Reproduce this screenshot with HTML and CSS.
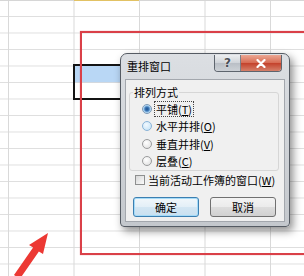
FILE: index.html
```html
<!DOCTYPE html>
<html>
<head>
	<title>重排窗口</title>
	<link rel="stylesheet" href="styles.css">
</head>
<body>

<div class="sheet">
	<div class="col-mark"></div>
	<div class="selection"><div class="sel-top"></div></div>

	<div class="mark"></div>

	<div class="dialog">
		<div class="titlebar">
			<span class="title">重排窗口</span>
			<div class="caption-btns">
				<span class="btn-help">?</span>
				<span class="btn-close">
					<svg width="10" height="9" viewBox="0 0 10 9"><path d="M1.5 1 L8.5 8 M8.5 1 L1.5 8" stroke="#fff" stroke-width="2.2" stroke-linecap="round"/></svg>
				</span>
			</div>
		</div>

		<div class="client">
			<fieldset class="group">
				<legend>排列方式</legend>
				<label class="opt"><span class="radio checked"></span><span class="focus">平铺(<u>T</u>)</span></label>
				<label class="opt"><span class="radio hover"></span><span>水平并排(<u>O</u>)</span></label>
				<label class="opt"><span class="radio"></span><span>垂直并排(<u>V</u>)</span></label>
				<label class="opt"><span class="radio"></span><span>层叠(<u>C</u>)</span></label>
			</fieldset>

			<label class="check"><span class="box"></span><span>当前活动工作簿的窗口(<u>W</u>)</span></label>

			<div class="buttons">
				<button class="btn default">确定</button>
				<button class="btn">取消</button>
			</div>
		</div>
	</div>

	<svg class="arrow" width="60" height="56" viewBox="0 220 60 56">
		<polygon points="48,233 43,254 38.9,251.5 19.8,279 14,275 33.1,247.5 29,245" fill="#ec3833"/>
	</svg>
</div>

</body>
</html>
```

FILE: styles.css
```css
body {margin: 0; padding: 0; font-family: "Noto Sans CJK SC", "Noto Sans", sans-serif; font-size: 11px; color: #000;}

/* spreadsheet background */
.sheet {position: relative; width: 304px; height: 276px; overflow: hidden; background-color: #fff;
	background-image: linear-gradient(to right, #d9d9d9 1px, transparent 1px), linear-gradient(to bottom, #dedede 1px, transparent 1px);
	background-size: 65.5px 16.5px; background-position: 8px 16px; box-shadow: inset 0 1px #d6d6d6;}
.col-mark {position: absolute; left: 74px; top: 0; width: 65px; height: 1px; background: #e2c264;}
.selection {position: absolute; left: 73px; top: 64px; width: 60px; height: 32px; border: 2px solid #141414;}
.sel-top {height: 16px; background: #b9d7f5; border-bottom: 1px solid #d3d8de;}

/* red highlight + arrow */
.mark {position: absolute; left: 80px; top: 31px; width: 240px; height: 220px; border: 2px solid #da4048; box-shadow: 0 0 1px rgba(218,64,72,.6);}
.arrow {position: absolute; left: 0; top: 220px;}

/* dialog */
.dialog {position: absolute; left: 120px; top: 53px; width: 170px; height: 174px; box-sizing: border-box;
	border: 1px solid #555b63; border-radius: 7px 7px 4px 4px; background: linear-gradient(#dcdfe3, #c4c8cd);
	box-shadow: 3px 4px 8px rgba(0,0,0,.45); display: flex; flex-direction: column; padding: 0 4px 4px 4px;}
.titlebar {height: 25px; display: flex; align-items: flex-start;}
.title {line-height: 25px; padding-left: 2px; font-size: 11px;}
.caption-btns {display: flex; margin: 1px 3px 0 auto; border: 1px solid #5e656e; border-top: none; border-radius: 0 0 4px 4px; overflow: hidden;}
.btn-help {width: 25px; height: 16px; border-right: 1px solid #7a8089; background: linear-gradient(#eceef0, #cfd3d8 50%, #b9bec5 50%, #cdd1d6);
	font: bold 12px/16px "DejaVu Sans", sans-serif; color: #4a4f56; text-align: center; text-shadow: 0 0 2px #fff;}
.btn-close {width: 40px; height: 16px; display: flex; align-items: center; justify-content: center;
	background: linear-gradient(#eca793, #d66a52 50%, #c3402a 50%, #d5806a);}

.client {flex: 1; background: #f0f0f0; border: 1px solid #a3a7ad; display: flex; flex-direction: column;}
.group {margin: 5px 5px 0 3px; padding: 1px 0 0 0; border: 1px solid #d6d6d6; border-radius: 3px;}
.group legend {margin-left: 3px; padding: 0 1px; line-height: 14px;}
.opt {display: flex; align-items: center; height: 17.5px; padding-left: 12px; gap: 4px;}
.opt u, .check u {text-decoration: underline;}
.radio {width: 10px; height: 10px; box-sizing: border-box; border-radius: 50%; border: 1px solid #9a9b9c;
	background: radial-gradient(circle at 40% 35%, #fff, #dcdcdc);}
.radio.hover {border-color: #8ab4d8; background: radial-gradient(circle at 40% 35%, #f2f9ff, #bfe0f5);}
.radio.checked {border-color: #7d99b6; background: radial-gradient(circle, #1f4f8a 0, #3b78b8 2px, #a9d1f0 3.5px, #eef6fc 5px);}
.focus {border: 1px dotted #444; padding: 0 1px; margin-left: -2px; line-height: 14px;}

.check {display: flex; align-items: center; height: 16px; margin-top: 1px; padding-left: 9px; gap: 3px;}
.box {width: 10px; height: 10px; box-sizing: border-box; border: 1px solid #8e8f8f; background: linear-gradient(135deg, #d6d6d6, #fbfbfb);}

.buttons {display: flex; gap: 11px; margin-top: 9px; padding-left: 7px;}
.btn {width: 66px; height: 20px; padding: 0; border: 1px solid #707070; border-radius: 3px; font-family: inherit; font-size: 11px; color: #000;
	background: linear-gradient(#f3f3f3, #ebebeb 50%, #dddddd 50%, #d0d0d0);}
.btn.default {border-color: #3c7fb1; box-shadow: inset 0 0 0 1px #a5dbf8; background: linear-gradient(#f1f7fb, #e3eff7 50%, #d3e6f3 50%, #c9e0f0);}
```
